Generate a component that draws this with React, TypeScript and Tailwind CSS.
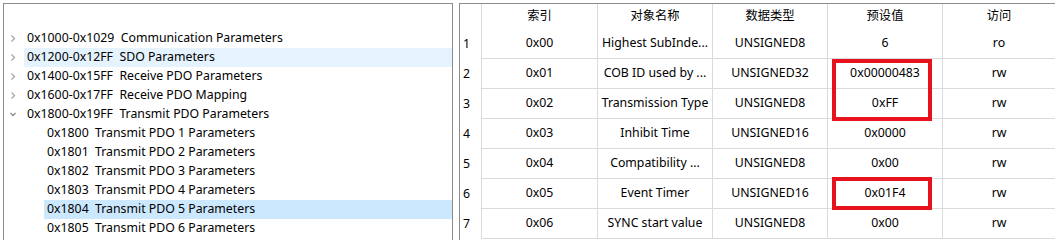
import React from "react";

const font = { fontFamily: '"Noto Sans", "Noto Sans CJK SC", sans-serif' };

const tree = [
  { level: 0, open: false, code: "0x1000-0x1029", label: "Communication Parameters" },
  { level: 0, open: false, code: "0x1200-0x12FF", label: "SDO Parameters", hover: true },
  { level: 0, open: false, code: "0x1400-0x15FF", label: "Receive PDO Parameters" },
  { level: 0, open: false, code: "0x1600-0x17FF", label: "Receive PDO Mapping" },
  { level: 0, open: true, code: "0x1800-0x19FF", label: "Transmit PDO Parameters" },
  { level: 1, code: "0x1800", label: "Transmit PDO 1 Parameters" },
  { level: 1, code: "0x1801", label: "Transmit PDO 2 Parameters" },
  { level: 1, code: "0x1802", label: "Transmit PDO 3 Parameters" },
  { level: 1, code: "0x1803", label: "Transmit PDO 4 Parameters" },
  { level: 1, code: "0x1804", label: "Transmit PDO 5 Parameters", selected: true },
  { level: 1, code: "0x1805", label: "Transmit PDO 6 Parameters" },
];

const headers = ["索引", "对象名称", "数据类型", "预设值", "访问"];

const rows = [
  ["0x00", "Highest SubInde...", "UNSIGNED8", "6", "ro"],
  ["0x01", "COB ID used by ...", "UNSIGNED32", "0x00000483", "rw"],
  ["0x02", "Transmission Type", "UNSIGNED8", "0xFF", "rw"],
  ["0x03", "Inhibit Time", "UNSIGNED16", "0x0000", "rw"],
  ["0x04", "Compatibility ...", "UNSIGNED8", "0x00", "rw"],
  ["0x05", "Event Timer", "UNSIGNED16", "0x01F4", "rw"],
  ["0x06", "SYNC start value", "UNSIGNED8", "0x00", "rw"],
];

const colW = ["w-[116px]", "w-[115px]", "w-[115px]", "w-[115px]", "flex-1"];

function Chevron({ open }: { open: boolean }) {
  return (
    <svg width="20" height="19" viewBox="0 0 20 19" className="shrink-0">
      {open ? (
        <polyline points="6.5,8 9,10.5 11.5,8" fill="none" stroke="#8a8a8a" strokeWidth="1.3" />
      ) : (
        <polyline points="7.5,6.5 10.5,9.5 7.5,12.5" fill="none" stroke="#a6a6a6" strokeWidth="1.3" />
      )}
    </svg>
  );
}

export default function App() {
  return (
    <div className="h-[240px] w-[1055px] overflow-hidden bg-white text-[12.3px] text-black" style={font}>
      <div className="flex pt-[3px] pl-[3px]">
        <div className="w-[450px] h-[260px] border-l border-t border-r border-[#8c8c8c] pt-[25px]">
          {tree.map((item, i) => (
            <div key={i} className={`flex h-[19px] items-center ${item.level === 1 ? "pl-[20px]" : ""}`}>
              {item.level === 0 ? <Chevron open={!!item.open} /> : <div className="w-[20px] shrink-0" />}
              <div
                className={`flex h-[19px] flex-1 items-center pl-[3px] whitespace-pre ${
                  item.selected ? "bg-[#cce8ff]" : item.hover ? "bg-[#e5f3ff]" : ""
                }`}
              >
                {item.code + "  " + item.label}
              </div>
            </div>
          ))}
        </div>
        <div className="relative ml-[6px] h-[260px] flex-1 border-l border-t border-[#8c8c8c]">
          <div className="flex h-[25px]">
            <div className="w-[22px] shrink-0 border-r border-[#dadada]" />
            {headers.map((h, i) => (
              <div
                key={i}
                className={`${colW[i]} shrink-0 flex items-center justify-center ${i < 4 ? "border-r border-[#dadada]" : ""}`}
              >
                {h}
              </div>
            ))}
          </div>
          {rows.map((r, ri) => (
            <div key={ri} className="flex h-[30px]">
              <div className="w-[22px] shrink-0 border-r border-[#dadada] flex items-center pl-[3px]">{ri + 1}</div>
              {r.map((c, ci) => (
                <div
                  key={ci}
                  className={`${colW[ci]} shrink-0 flex items-center justify-center border-b border-[#dadada] whitespace-nowrap ${
                    ci < 4 ? "border-r" : ""
                  }`}
                >
                  {c}
                </div>
              ))}
            </div>
          ))}
          <div className="absolute left-[372px] top-[55px] h-[62px] w-[100px] border-4 border-[#e8121e]" />
          <div className="absolute left-[372px] top-[173px] h-[33px] w-[100px] border-4 border-[#e8121e]" />
        </div>
      </div>
    </div>
  );
}
